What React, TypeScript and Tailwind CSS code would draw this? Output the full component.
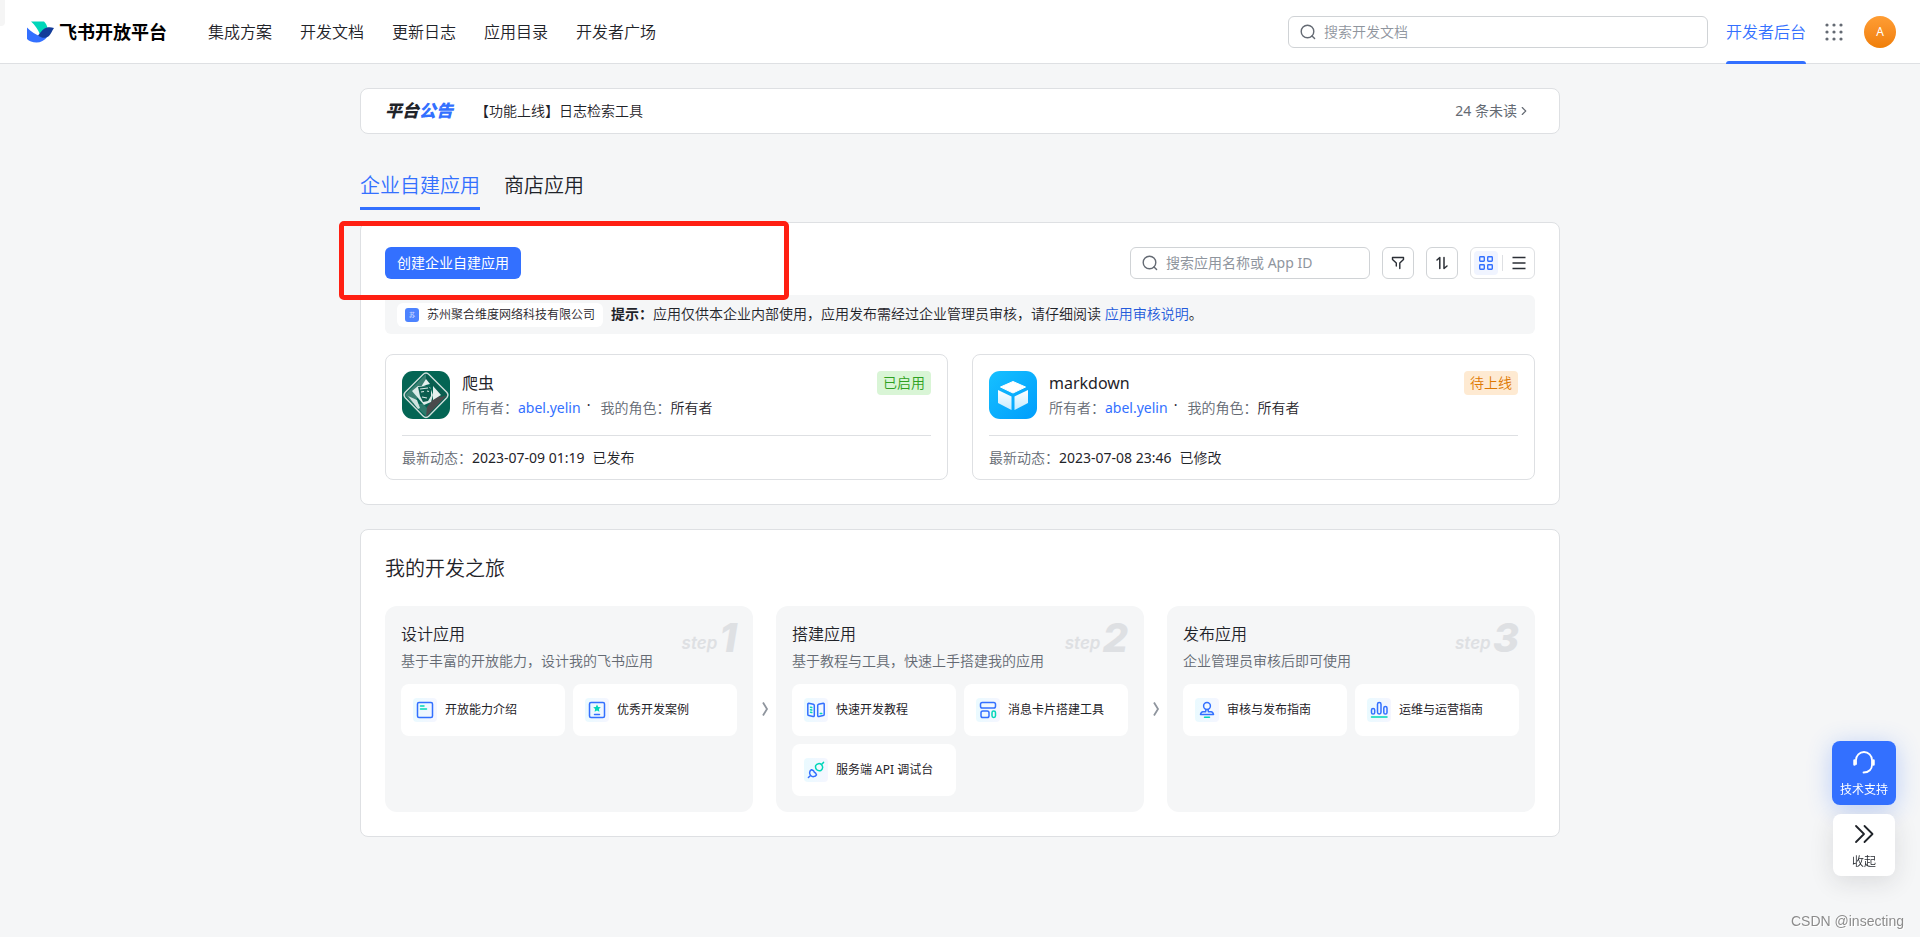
import React from "react";
import { ChevronRight } from "lucide-react";

const NAV_ITEMS = ["集成方案", "开发文档", "更新日志", "应用目录", "开发者广场"];

interface AppItem {
  name: string;
  icon: React.ReactNode;
  status: string;
  statusClass: string;
  updatedAt: string;
  action: string;
}

interface StepLink {
  label: string;
  icon: React.ReactNode;
}

interface Step {
  title: string;
  desc: string;
  links: StepLink[];
}

function Logo() {
  return (
    <svg width="27" height="22" viewBox="0 0 27 22" aria-hidden="true">
      <path d="M4 .5h13c2 2 3 4 3.500 6.500L13 13.500C11 8.500 8 4 4 .5z" fill="#00d6b9" />
      <path d="M0 6.500c4 4 9 7.500 14 9h6.500c-3 4-7 6-11 6S2 20 0 18z" fill="#3370ff" />
      <path d="M11 14.500c3.500-4 5.500-7.500 10-8.200 2-.3 4 0 6 .7-2.200 3-3 6-5 8-3 2.500-7 2.500-11-.5z" fill="#133c9a" />
    </svg>
  );
}

function SearchIcon() {
  return (
    <svg width="16" height="16" viewBox="0 0 16 16" fill="none" stroke="#646a73" strokeWidth="1.4" strokeLinecap="round" className="shrink-0" aria-hidden="true">
      <circle cx="7.5" cy="7.5" r="6.300" />
      <path d="M12 12l2.600 2.600" />
    </svg>
  );
}

function CrawlerIcon() {
  return (
    <svg width="48" height="48" viewBox="0 0 48 48" className="shrink-0" aria-hidden="true">
      <rect width="48" height="48" rx="11" fill="#046554" />
      <path d="M24 3L3 24l8 9L24 14z" fill="#3a8072" />
      <path d="M24 3l21 21-6 1L24 10z" fill="#0a5d4f" />
      <path d="M11 33l14 13v-9l-4-4z" fill="#2c7a6c" />
      <path d="M25 36l9-12 5 2 6-2-21 22z" fill="#4a4a4c" />
      <path d="M24 8l4 5-4 1-5 2zM31 15l8 9-8 5z" fill="#e6f0ee" />
      <path d="M10 20l6-5 12 1 3 8-2 7-7 3z" fill="#dcebe8" />
      <path d="M16 16l10-1 3 3v7l-3 5-5 1-3-6z" fill="#0a5d4f" />
      <path d="M19 21l3-.5M25 20l2 .5M20 26l5 1M18 18l8-1" stroke="#dcebe8" strokeWidth="1.2" />
      <path d="M6 25l9 4 3 8-2 1z" fill="#cfe2de" />
      <path d="M21 3.500Q24 .5 27 3.500L45 21.500Q47 24 45 26.500L27 45Q24 48 21 45L3 26.500Q1 24 3 21.500z" fill="none" stroke="#d3e0dd" strokeWidth="1.3" />
    </svg>
  );
}

function CubeIcon() {
  return (
    <svg width="48" height="48" viewBox="0 0 48 48" className="shrink-0" aria-hidden="true">
      <defs>
        <linearGradient id="cubeBg" x1="0" y1="0" x2="1" y2="1">
          <stop stopColor="#16c0ff" />
          <stop offset="1" stopColor="#009dfc" />
        </linearGradient>
        <linearGradient id="cubeFace" x1="0" y1="0" x2="0" y2="1">
          <stop stopColor="#fff" />
          <stop offset="1" stopColor="#c4ebff" />
        </linearGradient>
      </defs>
      <rect width="48" height="48" rx="11" fill="url(#cubeBg)" />
      <path d="M24 10.500l12.500 5.500L24 22 11.500 16z" fill="#fff" strokeLinejoin="round" stroke="#fff" strokeWidth="1" />
      <path d="M9 19l13.500 6.500V39L9 32z" fill="url(#cubeFace)" />
      <path d="M39 19l-13.500 6.500V39L39 32z" fill="url(#cubeFace)" />
    </svg>
  );
}

function LinkIcon({ children }: { children: React.ReactNode }) {
  return (
    <span className="flex size-6 shrink-0 items-center justify-center rounded bg-linear-to-r from-[#eafaff] to-[#f5f6ff]">
      <svg width="24" height="24" viewBox="0 0 24 24" fill="none" stroke="#3370ff" strokeWidth="1.5" strokeLinecap="round" strokeLinejoin="round" aria-hidden="true">
        {children}
      </svg>
    </span>
  );
}

const APPS: AppItem[] = [
  {
    name: "爬虫",
    icon: <CrawlerIcon />,
    status: "已启用",
    statusClass: "bg-[#d9f5d6] text-[#2ea121]",
    updatedAt: "2023-07-09 01:19",
    action: "已发布",
  },
  {
    name: "markdown",
    icon: <CubeIcon />,
    status: "待上线",
    statusClass: "bg-[#feead2] text-[#de7802]",
    updatedAt: "2023-07-08 23:46",
    action: "已修改",
  },
];

const STEPS: Step[] = [
  {
    title: "设计应用",
    desc: "基于丰富的开放能力，设计我的飞书应用",
    links: [
      {
        label: "开放能力介绍",
        icon: (
          <LinkIcon>
            <rect x="4.500" y="4.500" width="15" height="15" rx="1.500" />
            <path d="M7.500 8h3.500M7.500 11h6" stroke="#00d6b9" />
          </LinkIcon>
        ),
      },
      {
        label: "优秀开发案例",
        icon: (
          <LinkIcon>
            <rect x="4.500" y="4.500" width="15" height="15" rx="1.500" />
            <path d="M12 6.500l1.200 2.500 2.600.3-1.900 1.800.5 2.700-2.400-1.300-2.400 1.300.5-2.700-1.900-1.800 2.600-.3z" fill="#00d6b9" stroke="none" />
            <path d="M9.500 16.500h5" />
          </LinkIcon>
        ),
      },
    ],
  },
  {
    title: "搭建应用",
    desc: "基于教程与工具，快速上手搭建我的应用",
    links: [
      {
        label: "快速开发教程",
        icon: (
          <LinkIcon>
            <path d="M4.700 5.300l4.600 1q1 .3 1 1.200v10q0 1.300-1.200 1L4.800 17.600q-1-.2-1-1.200V6.200q0-1 .9-.9zM19.300 5.300l-4.600 1q-1 .3-1 1.200v10q0 1.300 1.200 1l4.300-.9q1-.2 1-1.200V6.200q0-1-.9-.9z" />
            <path d="M6.500 9.200l1.300.3M6.500 11.700l1.300.3M6.500 14.200l1.300.3M16.300 15.500h1.500" stroke="#00d6b9" />
          </LinkIcon>
        ),
      },
      {
        label: "消息卡片搭建工具",
        icon: (
          <LinkIcon>
            <rect x="4.500" y="4.500" width="15" height="5.500" rx="1.800" />
            <rect x="5" y="13" width="8" height="6.500" rx="1.800" />
            <rect x="16" y="13" width="3.500" height="6.500" rx="1.700" stroke="#00d6b9" />
          </LinkIcon>
        ),
      },
      {
        label: "服务端 API 调试台",
        icon: (
          <LinkIcon>
            <path d="M7.500 11.700a3.700 3.700 0 1 0 5 5.100l-.9-1.600-1.300-1-.7-1.500zM6 18l-1.600 1.500" />
            <path d="M11.700 7.500a3.700 3.700 0 1 1 5.100 5q-2.600.8-4.300-1-1.400-1.700-.8-4zM18 6l1.500-1.600" stroke="#00d6b9" />
          </LinkIcon>
        ),
      },
    ],
  },
  {
    title: "发布应用",
    desc: "企业管理员审核后即可使用",
    links: [
      {
        label: "审核与发布指南",
        icon: (
          <LinkIcon>
            <circle cx="12" cy="8" r="3.400" />
            <path d="M11 11.500l-.4 2.300H8q-2 .2-2.500 2.700h13q-.5-2.500-2.500-2.700h-2.600l-.4-2.300" />
            <path d="M9.500 19.300h5" stroke="#00d6b9" />
          </LinkIcon>
        ),
      },
      {
        label: "运维与运营指南",
        icon: (
          <LinkIcon>
            <rect x="4.500" y="10.500" width="3.200" height="5.500" rx="1.600" />
            <rect x="10.500" y="4.500" width="3.500" height="11.500" rx="1.700" />
            <rect x="16.800" y="8.500" width="3.200" height="7.500" rx="1.600" />
            <path d="M4.500 19h15.500" stroke="#00d6b9" />
          </LinkIcon>
        ),
      },
    ],
  },
];

function Header() {
  return (
    <header className="relative flex h-16 items-stretch border-b border-[#dee0e3] bg-white pr-6 pl-[27px]">
      <div className="absolute top-0 left-0 h-[26px] w-[5px] rounded-br bg-[#f5f5f5]" />
      <a href="#" className="flex items-center gap-[5px] text-lg font-bold text-black">
        <Logo />
        飞书开放平台
      </a>
      <nav className="ml-[41px] flex items-center gap-7 text-base">
        {NAV_ITEMS.map((item) => (
          <a key={item} href="#">
            {item}
          </a>
        ))}
      </nav>
      <div className="ml-auto flex items-stretch">
        <label className="flex h-8 w-[420px] items-center gap-2 self-center rounded-md border border-[#d0d3d6] px-[11px]">
          <SearchIcon />
          <input
            type="text"
            aria-label="搜索开发文档"
            placeholder="搜索开发文档"
            className="w-full text-sm outline-none placeholder:text-[#8f959e]"
          />
        </label>
        <a href="#" className="-mb-px ml-[18px] flex flex-col text-base text-[#3370ff]">
          <span className="flex flex-1 items-center pt-[3px]">开发者后台</span>
          <span className="h-[3px] rounded-t-sm bg-[#3370ff]" />
        </a>
        <button type="button" aria-label="应用" className="ml-[19px] cursor-pointer">
          <svg width="18" height="18" viewBox="0 0 18 18" fill="#646a73">
            {[2, 9, 16].map((y) => [2, 9, 16].map((x) => <circle key={`${x}-${y}`} cx={x} cy={y} r="1.6" />))}
          </svg>
        </button>
        <button
          type="button"
          className="ml-[21px] size-8 cursor-pointer self-center rounded-full bg-linear-to-b from-[#ff9d33] to-[#f07f05] text-xs font-normal text-white"
        >
          A
        </button>
      </div>
    </header>
  );
}

function Toolbar() {
  return (
    <div className="flex items-center gap-3 text-sm">
      {/* highlighted area around the create button */}
      <div className="relative mr-auto">
        <button type="button" className="h-8 cursor-pointer rounded-md bg-[#3370ff] px-3 font-normal text-white">
          创建企业自建应用
        </button>
        <div className="pointer-events-none absolute -top-[26px] -left-[46px] h-[79px] w-[450px] rounded-[5px] border-5 border-[#ff1f12]" />
      </div>
      <label className="flex h-8 w-60 items-center gap-2 rounded-md border border-[#d0d3d6] px-[11px]">
        <SearchIcon />
        <input
          type="text"
          aria-label="搜索应用名称或 App ID"
          placeholder="搜索应用名称或 App ID"
          className="w-full font-normal outline-none placeholder:text-[#8f959e]"
        />
      </label>
      <button type="button" aria-label="筛选" className="flex size-8 cursor-pointer items-center justify-center rounded-md border border-[#d0d3d6]">
        <svg width="16" height="16" viewBox="0 0 16 16" fill="none" stroke="#2b2f36" strokeWidth="1.4" strokeLinejoin="round" strokeLinecap="round">
          <path d="M6.300 11V8L2.500 4.500v-2h11v2L9.800 8v5.500" />
        </svg>
      </button>
      <button type="button" aria-label="排序" className="flex size-8 cursor-pointer items-center justify-center rounded-md border border-[#d0d3d6]">
        <svg width="16" height="16" viewBox="0 0 16 16" fill="none" stroke="#2b2f36" strokeWidth="1.5" strokeLinejoin="round" strokeLinecap="round">
          <path d="M3 5l2.800-2.500V13.500M10 2.500v11L13 11" />
        </svg>
      </button>
      <div className="flex h-8 items-center rounded-md border border-[#dee0e3] px-[3px]">
        <button type="button" aria-label="卡片视图" className="flex size-6 cursor-pointer items-center justify-center rounded bg-[#f0f4ff]">
          <svg width="16" height="16" viewBox="0 0 16 16" fill="none" stroke="#3370ff" strokeWidth="1.4">
            <rect x="1.700" y="1.700" width="4.600" height="4.600" rx=".7" />
            <rect x="9.700" y="1.700" width="4.600" height="4.600" rx=".7" />
            <rect x="1.700" y="9.700" width="4.600" height="4.600" rx=".7" />
            <rect x="9.700" y="9.700" width="4.600" height="4.600" rx=".7" />
          </svg>
        </button>
        <span className="mx-1 h-4 w-px bg-[#dee0e3]" />
        <button type="button" aria-label="列表视图" className="flex size-6 cursor-pointer items-center justify-center">
          <svg width="16" height="16" viewBox="0 0 16 16" fill="none" stroke="#2b2f36" strokeWidth="1.5">
            <path d="M1.500 2.500h13M1.500 8h13M1.500 13.500h13" />
          </svg>
        </button>
      </div>
    </div>
  );
}

function AppCard({ app }: { app: AppItem }) {
  return (
    <article className="flex flex-1 flex-col rounded-lg border border-[#dee0e3] px-4 pt-4 pb-[9px] text-sm">
      <div className="flex items-start gap-3 border-b border-[#dee0e3] pb-4">
        {app.icon}
        <div className="h-12 flex-1">
          <h3 className="text-base leading-6 font-normal">{app.name}</h3>
          <p className="flex leading-[26px]">
            <span className="text-[#646a73]">所有者：</span>
            <a href="#" className="font-normal text-[#3370ff]">abel.yelin</a>
            <span className="mx-1.5 leading-5 font-normal">·</span>
            <span className="ml-1 text-[#646a73]">我的角色：</span>
            <span>所有者</span>
          </p>
        </div>
        <span className={`h-6 rounded px-1.5 leading-6 ${app.statusClass}`}>{app.status}</span>
      </div>
      <p className="pt-2.5 leading-6">
        <span className="text-[#646a73]">最新动态：</span>
        <time className="font-normal">{app.updatedAt}</time>
        <span className="ml-2">{app.action}</span>
      </p>
    </article>
  );
}

function StepCard({ step, index }: { step: Step; index: number }) {
  return (
    <div className="flex-1 rounded-xl bg-[#f5f6f7] p-4">
      <div className="flex items-start justify-between">
        <div>
          <h3 className="text-base leading-6">{step.title}</h3>
          <p className="mt-0.5 text-sm leading-[26px] text-[#646a73]">{step.desc}</p>
        </div>
        <div className="-mt-1 flex items-end gap-0.5 font-[Inter,sans-serif] text-[#dee0e3] italic">
          <span className="pb-[3px] text-[17px] leading-6 font-semibold">step</span>
          <span className="text-[40px] leading-10 font-extrabold">{index + 1}</span>
        </div>
      </div>
      <div className="mt-2.5 grid grid-cols-2 gap-2">
        {step.links.map((link) => (
          <a key={link.label} href="#" className="flex h-[52px] items-center gap-2 rounded-lg bg-white px-3 text-xs font-normal">
            {link.icon}
            {link.label}
          </a>
        ))}
      </div>
    </div>
  );
}

function FloatingTools() {
  return (
    <div className="fixed right-6 bottom-[61px] flex flex-col items-center gap-[9px] text-xs">
      <button
        type="button"
        className="flex size-16 cursor-pointer flex-col items-center justify-center gap-2 rounded-lg bg-[#3370ff] pt-0.5 font-normal text-white shadow-[0_4px_24px_rgba(51,112,255,0.3)]"
      >
        <svg width="24" height="24" viewBox="0 0 24 24" fill="none" stroke="currentColor" strokeWidth="1.8" strokeLinecap="round">
          <path d="M4 14V10a8 8 0 0 1 16 0v5c0 4-3 7.500-8.500 7.500" />
          <path d="M2.500 10.500v4M21.500 10.500v4" strokeWidth="2.500" />
        </svg>
        技术支持
      </button>
      <button
        type="button"
        className="flex size-[62px] cursor-pointer flex-col items-center justify-center gap-2 rounded-lg bg-white pt-0.5 shadow-[0_6px_24px_rgba(31,35,41,0.12)]"
      >
        <svg width="24" height="24" viewBox="0 0 24 24" fill="none" stroke="#1f2329" strokeWidth="1.8" strokeLinecap="round" strokeLinejoin="round">
          <path d="M4 4l8 8-8 8M12.500 4l8 8-8 8" />
        </svg>
        收起
      </button>
    </div>
  );
}

export default function App() {
  return (
    <div className="min-h-screen bg-[#f5f6f7] font-['Noto_Sans','Noto_Sans_CJK_SC',sans-serif] font-[350] text-[#1f2329]">
      <Header />
      <main className="mx-auto max-w-[1200px] pt-6 pb-10">
        <section className="flex h-[46px] items-center rounded-lg border border-[#dee0e3] bg-white pr-7 pl-6 text-sm">
          <h2 className="text-[17px] font-black italic">
            平台<span className="text-[#3370ff]">公告</span>
          </h2>
          <a href="#" className="ml-[22px]">【功能上线】日志检索工具</a>
          <a href="#" className="ml-auto flex items-center font-normal text-[#646a73]">
            24 条未读
            <ChevronRight className="size-3.5" />
          </a>
        </section>

        <div role="tablist" className="mt-[34px] flex gap-6 text-xl">
          <button type="button" role="tab" aria-selected="true" className="h-[42px] cursor-pointer border-b-3 border-[#3370ff] pb-1 text-[#3370ff]">
            企业自建应用
          </button>
          <button type="button" role="tab" aria-selected="false" className="h-[42px] cursor-pointer border-b-3 border-transparent pb-1">
            商店应用
          </button>
        </div>

        <section className="mt-3 rounded-lg border border-[#dee0e3] bg-white p-6">
          <Toolbar />
          <div className="mt-4 flex h-[39px] items-center gap-2 rounded-md bg-[#f5f6f7] px-3 text-sm">
            <span className="flex h-6 items-center gap-2 rounded-md bg-white px-2 text-xs">
              <span className="flex size-3.5 items-center justify-center rounded-[3px] bg-[#4d83ff] text-[6px] text-white">苏</span>
              苏州聚合维度网络科技有限公司
            </span>
            <p className="pb-0.5">
              <strong>提示：</strong>应用仅供本企业内部使用，应用发布需经过企业管理员审核，请仔细阅读{" "}
              <a href="#" className="text-[#245bdb]">应用审核说明</a>。
            </p>
          </div>
          <div className="mt-5 flex gap-6">
            {APPS.map((app) => (
              <AppCard key={app.name} app={app} />
            ))}
          </div>
        </section>

        <section className="mt-6 rounded-lg border border-[#dee0e3] bg-white p-6">
          <h2 className="text-xl leading-[30px]">我的开发之旅</h2>
          <div className="mt-[22px] flex">
            {STEPS.map((step, i) => (
              <React.Fragment key={step.title}>
                {i > 0 && (
                  <svg width="23" height="16" viewBox="0 0 23 16" fill="none" stroke="#8f959e" strokeWidth="1.8" className="self-center">
                    <path d="M10 1.500l4 6.500-4 6.500" />
                  </svg>
                )}
                <StepCard step={step} index={i} />
              </React.Fragment>
            ))}
          </div>
        </section>
      </main>
      <FloatingTools />
      <div className="fixed right-4 bottom-1.5 font-['Liberation_Sans',sans-serif] text-sm font-normal text-[#8c8c8c] [text-shadow:1px_1px_0_#fff]">
        CSDN @insecting
      </div>
    </div>
  );
}
